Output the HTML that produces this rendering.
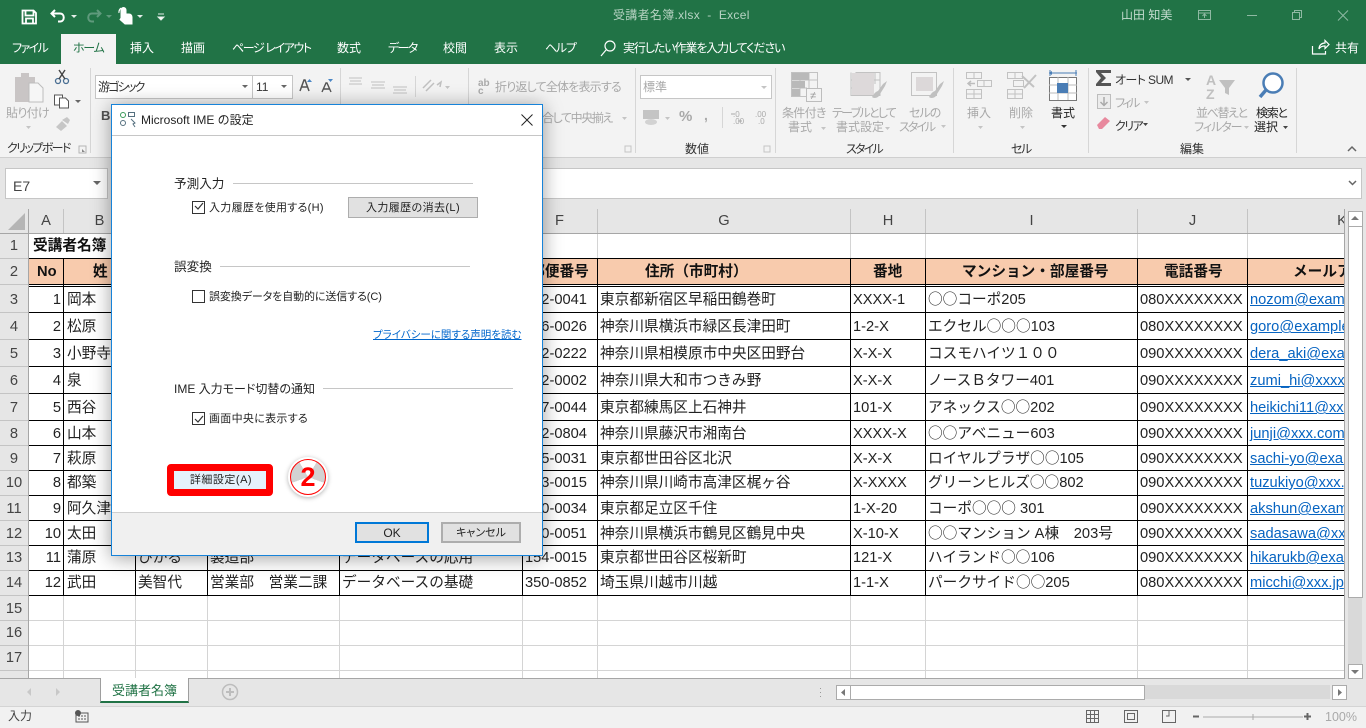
<!DOCTYPE html>
<html lang="ja"><head><meta charset="utf-8"><title>受講者名簿.xlsx - Excel</title>
<style>
html,body{margin:0;padding:0;width:1366px;height:728px;overflow:hidden;background:#e6e6e6}
body{font-family:"Liberation Sans","Noto Sans CJK JP",sans-serif;position:relative;color:#222}
.abs,.t{position:absolute}
.t{white-space:nowrap;font-size:12px;line-height:20px;height:20px;font-feature-settings:"palt";}
.w{color:#fff}.g0{color:#a9a9a9}.d0{color:#333}
svg{position:absolute;left:0;top:0;overflow:visible}
#grid{position:absolute;left:0;top:209px;width:1345px;height:469px;overflow:hidden;background:#fff}
.r{position:absolute;left:0;width:1345px;font-size:14.67px;color:#222;white-space:nowrap}
.r span{position:absolute;top:0}
.o{font-style:normal;font-family:"Noto Sans CJK JP",sans-serif;line-height:0}
.n{left:0;width:28px;text-align:center;color:#444}
.a{left:29px;width:32px;text-align:right}
.b{left:67px}.c{left:138px}.d{left:210px}.e{left:342px}.f{left:525px}.g{left:600px}.h{left:853px}.i{left:928px}.j{left:1140px}
.k{left:1250px;color:#0563c1;text-decoration:underline}
.hd{font-weight:bold;color:#111}
.col{position:absolute;top:0;height:24px;line-height:24px;text-align:center;font-size:14.67px;color:#444}
#dlg{position:absolute;left:111px;top:104px;width:430px;height:450px;background:#fff;border:1px solid #1783d9;box-shadow:0 2px 18px rgba(0,0,0,.38)}
#dlg .t{font-size:11px;color:#222}
.ln{position:absolute;height:1px;background:#c6c6c6}
.cb{position:absolute;left:80px;width:11px;height:11px;border:1px solid #333;background:#fff}
.btn{position:absolute;box-sizing:border-box;background:#e1e1e1;border:1px solid #adadad;text-align:center;font-size:11px;color:#222;font-feature-settings:"palt"}
</style></head><body>

<div class="abs" style="left:0;top:0;width:1366px;height:64px;background:#217346"></div>
<div class="abs" style="left:61px;top:34px;width:55px;height:30px;background:#f3f3f3"></div>
<div class="abs" style="left:0;top:64px;width:1366px;height:93px;background:#f3f3f3;border-bottom:1px solid #cfcfcf"></div>

<!-- titlebar text -->
<div class="t" style="left:613px;top:5px;color:#b7d3c3;letter-spacing:.3px">受講者名簿.xlsx &nbsp;- &nbsp;Excel</div>
<div class="t" style="left:1121px;top:5px;color:#c4dccf">山田 知美</div>
<div class="t w" style="left:12px;top:38px;letter-spacing:-1.6px">ファイル</div>
<div class="t" style="left:73px;top:38px;color:#217346;letter-spacing:-1.3px">ホーム</div>
<div class="t w" style="left:130px;top:38px">挿入</div>
<div class="t w" style="left:181px;top:38px">描画</div>
<div class="t w" style="left:232px;top:38px;letter-spacing:-1.4px">ページ レイアウト</div>
<div class="t w" style="left:337px;top:38px">数式</div>
<div class="t w" style="left:388px;top:38px;letter-spacing:-1.6px">データ</div>
<div class="t w" style="left:443px;top:38px">校閲</div>
<div class="t w" style="left:494px;top:38px">表示</div>
<div class="t w" style="left:545px;top:38px;letter-spacing:-1.3px">ヘルプ</div>
<div class="t w" style="left:623px;top:38px;letter-spacing:-1.1px">実行したい作業を入力してください</div>
<div class="t w" style="left:1335px;top:38px">共有</div>

<!-- ribbon text -->
<div class="t g0" style="left:6px;top:103px;letter-spacing:-.7px">貼り付け</div>
<div class="t d0" style="left:7px;top:138px;letter-spacing:-1.6px">クリップボード</div>
<div class="abs" style="left:95px;top:75px;width:156px;height:22px;background:#fff;border:1px solid #c6c6c6"></div>
<div class="abs" style="left:252px;top:75px;width:39px;height:22px;background:#fff;border:1px solid #c6c6c6"></div>
<div class="t d0" style="left:98px;top:77px;letter-spacing:-1.8px">游ゴシック</div>
<div class="t d0" style="left:256px;top:77px">11</div>
<div class="t" style="left:101px;top:106px;font-weight:bold;color:#555;font-size:13px">B</div>
<div class="t g0" style="left:495px;top:77px;letter-spacing:-.8px">折り返して全体を表示する</div>
<div class="t g0" style="left:542px;top:108px;letter-spacing:-1.4px">合して中央揃え</div>
<div class="abs" style="left:640px;top:75px;width:130px;height:22px;background:#fff;border:1px solid #c6c6c6"></div>
<div class="t g0" style="left:643px;top:77px">標準</div>
<div class="t g0" style="left:679px;top:107px;font-size:15px;font-weight:bold">%</div>
<div class="t d0" style="left:685px;top:139px">数値</div>
<div class="t g0" style="left:782px;top:103px;letter-spacing:-.7px">条件付き</div>
<div class="t g0" style="left:788px;top:117px">書式</div>
<div class="t g0" style="left:832px;top:103px;letter-spacing:-1.7px">テーブルとして</div>
<div class="t g0" style="left:836px;top:117px">書式設定</div>
<div class="t g0" style="left:909px;top:103px;letter-spacing:-1px">セルの</div>
<div class="t g0" style="left:899px;top:117px;letter-spacing:-2px">スタイル</div>
<div class="t d0" style="left:846px;top:139px;letter-spacing:-1.8px">スタイル</div>
<div class="t g0" style="left:967px;top:103px">挿入</div>
<div class="t g0" style="left:1009px;top:103px">削除</div>
<div class="t" style="left:1051px;top:103px;color:#222">書式</div>
<div class="t d0" style="left:1011px;top:139px;letter-spacing:-1.5px">セル</div>
<div class="t d0" style="left:1115px;top:70px;letter-spacing:-.6px">オート SUM</div>
<div class="t g0" style="left:1115px;top:93px;letter-spacing:-2.5px">フィル</div>
<div class="t d0" style="left:1115px;top:116px;letter-spacing:-1.5px">クリア</div>
<div class="t g0" style="left:1196px;top:103px;letter-spacing:-1.4px">並べ替えと</div>
<div class="t g0" style="left:1194px;top:117px;letter-spacing:-1px">フィルター</div>
<div class="t" style="left:1256px;top:103px;color:#222;letter-spacing:-1.3px">検索と</div>
<div class="t" style="left:1254px;top:117px;color:#222">選択</div>
<div class="t d0" style="left:1180px;top:139px">編集</div>

<!-- formula bar -->
<div class="abs" style="left:5px;top:168px;width:101px;height:29px;background:#fff;border:1px solid #c6c6c6"></div>
<div class="t" style="left:13px;top:176px;font-size:14px;color:#444">E7</div>
<div class="abs" style="left:300px;top:168px;width:1060px;height:29px;background:#fff;border:1px solid #c6c6c6"></div>

<!-- grid -->
<div id="grid">
<div class="abs" style="left:0;top:0;width:1345px;height:25px;background:#e6e6e6"></div>
<div class="abs" style="left:0;top:0;width:28px;height:469px;background:#e6e6e6"></div>
<div class="abs" style="left:29px;top:49px;width:1316px;height:27px;background:#f8cbad"></div>
<svg width="1345" height="469" shape-rendering="crispEdges">
<g transform="translate(0,-209)">
<polygon points="25,213 25,230 8,230" fill="#b5b5b5" shape-rendering="auto"/>
<!-- light gridlines -->
<g fill="#d4d4d4">
<rect x="135" y="234" width="1" height="24"/><rect x="207" y="234" width="1" height="24"/><rect x="339" y="234" width="1" height="24"/><rect x="522" y="234" width="1" height="24"/><rect x="597" y="234" width="1" height="24"/><rect x="850" y="234" width="1" height="24"/><rect x="925" y="234" width="1" height="24"/><rect x="1137" y="234" width="1" height="24"/><rect x="1247" y="234" width="1" height="24"/>
<rect x="63" y="596" width="1" height="82"/><rect x="135" y="596" width="1" height="82"/><rect x="207" y="596" width="1" height="82"/><rect x="339" y="596" width="1" height="82"/><rect x="522" y="596" width="1" height="82"/><rect x="597" y="596" width="1" height="82"/><rect x="850" y="596" width="1" height="82"/><rect x="925" y="596" width="1" height="82"/><rect x="1137" y="596" width="1" height="82"/><rect x="1247" y="596" width="1" height="82"/>
<rect x="29" y="620" width="1316" height="1"/><rect x="29" y="645" width="1316" height="1"/><rect x="29" y="670" width="1316" height="1"/>
</g>
<!-- header separators -->
<g fill="#c4c4c4">
<rect x="63" y="209" width="1" height="24"/><rect x="135" y="209" width="1" height="24"/><rect x="207" y="209" width="1" height="24"/><rect x="339" y="209" width="1" height="24"/><rect x="522" y="209" width="1" height="24"/><rect x="597" y="209" width="1" height="24"/><rect x="850" y="209" width="1" height="24"/><rect x="925" y="209" width="1" height="24"/><rect x="1137" y="209" width="1" height="24"/><rect x="1247" y="209" width="1" height="24"/>
<rect x="0" y="258" width="28" height="1"/><rect x="0" y="284" width="28" height="1"/><rect x="0" y="312" width="28" height="1"/><rect x="0" y="339" width="28" height="1"/><rect x="0" y="366" width="28" height="1"/><rect x="0" y="393" width="28" height="1"/><rect x="0" y="420" width="28" height="1"/><rect x="0" y="445" width="28" height="1"/><rect x="0" y="470" width="28" height="1"/><rect x="0" y="495" width="28" height="1"/><rect x="0" y="520" width="28" height="1"/><rect x="0" y="545" width="28" height="1"/><rect x="0" y="570" width="28" height="1"/><rect x="0" y="595" width="28" height="1"/><rect x="0" y="620" width="28" height="1"/><rect x="0" y="645" width="28" height="1"/><rect x="0" y="670" width="28" height="1"/>
</g>
<rect x="28" y="209" width="1" height="469" fill="#a6a6a6"/>
<rect x="0" y="233" width="1345" height="1" fill="#a6a6a6"/>
<!-- table borders -->
<g fill="#000">
<rect x="29" y="258" width="1316" height="1"/><rect x="29" y="284" width="1316" height="1"/><rect x="29" y="286" width="1316" height="1"/>
<rect x="29" y="312" width="1316" height="1"/><rect x="29" y="339" width="1316" height="1"/><rect x="29" y="366" width="1316" height="1"/><rect x="29" y="393" width="1316" height="1"/><rect x="29" y="420" width="1316" height="1"/><rect x="29" y="445" width="1316" height="1"/><rect x="29" y="470" width="1316" height="1"/><rect x="29" y="495" width="1316" height="1"/><rect x="29" y="520" width="1316" height="1"/><rect x="29" y="545" width="1316" height="1"/><rect x="29" y="570" width="1316" height="1"/><rect x="29" y="595" width="1316" height="1"/>
<rect x="63" y="258" width="1" height="338"/><rect x="135" y="258" width="1" height="338"/><rect x="207" y="258" width="1" height="338"/><rect x="339" y="258" width="1" height="338"/><rect x="522" y="258" width="1" height="338"/><rect x="597" y="258" width="1" height="338"/><rect x="850" y="258" width="1" height="338"/><rect x="925" y="258" width="1" height="338"/><rect x="1137" y="258" width="1" height="338"/><rect x="1247" y="258" width="1" height="338"/>
</g>
</g></svg>

<div class="col" style="left:29px;width:34px">A</div><div class="col" style="left:64px;width:71px">B</div><div class="col" style="left:522px;width:75px">F</div><div class="col" style="left:598px;width:252px">G</div><div class="col" style="left:851px;width:74px">H</div><div class="col" style="left:926px;width:211px">I</div><div class="col" style="left:1138px;width:109px">J</div><div class="col" style="left:1336px;width:12px">K</div>

<div class="r" style="top:25px;height:24px;line-height:24px"><span class="n">1</span><span class="hd" style="left:33px">受講者名簿</span></div>
<div class="r" style="top:50px;height:26px;line-height:26px"><span class="n">2</span><span class="hd" style="left:37px">No</span><span class="hd" style="left:93px">姓</span><span class="hd" style="left:522px;width:75px;text-align:center">郵便番号</span><span class="hd" style="left:645px">住所（市町村）</span><span class="hd" style="left:873px">番地</span><span class="hd" style="left:962px">マンション・部屋番号</span><span class="hd" style="left:1164px">電話番号</span><span class="hd" style="left:1293px">メールアドレス</span></div>
<div class="r" style="top:78px;height:27px;line-height:27px"><span class="n">3</span><span class="a">1</span><span class="b">岡本</span><span class="f">162-0041</span><span class="g">東京都新宿区早稲田鶴巻町</span><span class="h">XXXX-1</span><span class="i"><em class="o">○○</em>コーポ205</span><span class="j">080XXXXXXXX</span><span class="k">nozom@example.jp</span></div>
<div class="r" style="top:105px;height:27px;line-height:27px"><span class="n">4</span><span class="a">2</span><span class="b">松原</span><span class="f">226-0026</span><span class="g">神奈川県横浜市緑区長津田町</span><span class="h">1-2-X</span><span class="i">エクセル<em class="o">○○○</em>103</span><span class="j">080XXXXXXXX</span><span class="k">goro@example.jp</span></div>
<div class="r" style="top:132px;height:27px;line-height:27px"><span class="n">5</span><span class="a">3</span><span class="b">小野寺</span><span class="f">252-0222</span><span class="g">神奈川県相模原市中央区田野台</span><span class="h">X-X-X</span><span class="i">コスモハイツ１００</span><span class="j">090XXXXXXXX</span><span class="k">dera_aki@example.jp</span></div>
<div class="r" style="top:159px;height:27px;line-height:27px"><span class="n">6</span><span class="a">4</span><span class="b">泉</span><span class="f">242-0002</span><span class="g">神奈川県大和市つきみ野</span><span class="h">X-X-X</span><span class="i">ノースＢタワー401</span><span class="j">090XXXXXXXX</span><span class="k">zumi_hi@xxxx.jp</span></div>
<div class="r" style="top:186px;height:27px;line-height:27px"><span class="n">7</span><span class="a">5</span><span class="b">西谷</span><span class="f">177-0044</span><span class="g">東京都練馬区上石神井</span><span class="h">101-X</span><span class="i">アネックス<em class="o">○○</em>202</span><span class="j">090XXXXXXXX</span><span class="k">heikichi11@xxx.jp</span></div>
<div class="r" style="top:213px;height:25px;line-height:25px"><span class="n">8</span><span class="a">6</span><span class="b">山本</span><span class="f">252-0804</span><span class="g">神奈川県藤沢市湘南台</span><span class="h">XXXX-X</span><span class="i"><em class="o">○○</em>アベニュー603</span><span class="j">090XXXXXXXX</span><span class="k">junji@xxx.com</span></div>
<div class="r" style="top:238px;height:25px;line-height:25px"><span class="n">9</span><span class="a">7</span><span class="b">萩原</span><span class="f">155-0031</span><span class="g">東京都世田谷区北沢</span><span class="h">X-X-X</span><span class="i">ロイヤルプラザ<em class="o">○○</em>105</span><span class="j">090XXXXXXXX</span><span class="k">sachi-yo@example.jp</span></div>
<div class="r" style="top:262px;height:25px;line-height:25px"><span class="n">10</span><span class="a">8</span><span class="b">都築</span><span class="f">213-0015</span><span class="g">神奈川県川崎市高津区梶ヶ谷</span><span class="h">X-XXXX</span><span class="i">グリーンヒルズ<em class="o">○○</em>802</span><span class="j">090XXXXXXXX</span><span class="k">tuzukiyo@xxx.jp</span></div>
<div class="r" style="top:288px;height:25px;line-height:25px"><span class="n">11</span><span class="a">9</span><span class="b">阿久津</span><span class="f">120-0034</span><span class="g">東京都足立区千住</span><span class="h">1-X-20</span><span class="i">コーポ<em class="o">○○○</em> 301</span><span class="j">090XXXXXXXX</span><span class="k">akshun@example.jp</span></div>
<div class="r" style="top:313px;height:25px;line-height:25px"><span class="n">12</span><span class="a">10</span><span class="b">太田</span><span class="f">230-0051</span><span class="g">神奈川県横浜市鶴見区鶴見中央</span><span class="h">X-10-X</span><span class="i"><em class="o">○○</em>マンション A棟　203号</span><span class="j">090XXXXXXXX</span><span class="k">sadasawa@xxx.jp</span></div>
<div class="r" style="top:337px;height:25px;line-height:25px"><span class="n">13</span><span class="a">11</span><span class="b">蒲原</span><span class="c">ひかる</span><span class="d">製造部</span><span class="e">データベースの応用</span><span class="f">154-0015</span><span class="g">東京都世田谷区桜新町</span><span class="h">121-X</span><span class="i">ハイランド<em class="o">○○</em>106</span><span class="j">090XXXXXXXX</span><span class="k">hikarukb@example.jp</span></div>
<div class="r" style="top:362px;height:25px;line-height:25px"><span class="n">14</span><span class="a">12</span><span class="b">武田</span><span class="c">美智代</span><span class="d">営業部　営業二課</span><span class="e">データベースの基礎</span><span class="f">350-0852</span><span class="g">埼玉県川越市川越</span><span class="h">1-1-X</span><span class="i">パークサイド<em class="o">○○</em>205</span><span class="j">080XXXXXXXX</span><span class="k">micchi@xxx.jp</span></div>
<div class="r" style="top:388px;height:25px;line-height:25px"><span class="n">15</span></div>
<div class="r" style="top:412px;height:25px;line-height:25px"><span class="n">16</span></div>
<div class="r" style="top:437px;height:25px;line-height:25px"><span class="n">17</span></div>
</div>

<!-- bottom chrome -->
<div class="abs" style="left:1344px;top:209px;width:1px;height:470px;background:#a6a6a6"></div>
<div class="abs" style="left:0;top:678px;width:1345px;height:1px;background:#a6a6a6"></div>
<div class="abs" style="left:1348px;top:211px;width:14px;height:467px;background:#d9d9d9"></div>
<div class="abs" style="left:1348px;top:211px;width:13px;height:14px;background:#fff;border:1px solid #ababab"></div>
<div class="abs" style="left:1348px;top:226px;width:13px;height:370px;background:#fff;border:1px solid #ababab"></div>
<div class="abs" style="left:1348px;top:664px;width:13px;height:13px;background:#fff;border:1px solid #ababab"></div>
<div class="abs" style="left:100px;top:678px;width:87px;height:23px;background:#fff;border-left:1px solid #9e9e9e;border-right:1px solid #9e9e9e;border-bottom:2px solid #217346"></div>
<div class="t" style="left:112px;top:681px;font-size:13px;color:#217346;font-feature-settings:normal">受講者名簿</div>
<div class="abs" style="left:0;top:706px;width:1366px;height:22px;background:#f1f1f1;border-top:1px solid #d4d4d4;box-sizing:border-box"></div>
<div class="t" style="left:8px;top:706px;color:#444">入力</div>
<div class="abs" style="left:836px;top:685px;width:494px;height:14px;background:#d9d9d9"></div>
<div class="abs" style="left:836px;top:685px;width:13px;height:13px;background:#fff;border:1px solid #ababab"></div>
<div class="abs" style="left:850px;top:685px;width:293px;height:13px;background:#fff;border:1px solid #ababab"></div>
<div class="abs" style="left:1332px;top:685px;width:13px;height:13px;background:#fff;border:1px solid #ababab"></div>
<div class="t" style="left:1325px;top:707px;color:#a9a9a9;font-size:12.5px">100%</div>

<!-- icons -->
<svg width="1366" height="728" style="pointer-events:none">
<!-- QAT -->
<path d="M22.5 10.5h11l2.5 2.5v10.5h-13.500zM25.500 10.500v5h8v-5M26 23.500v-5h7v5" fill="none" stroke="#fff" stroke-width="1.800"/>
<path d="M55 10l-3.500 3.500 3.500 3.500M52 13.500h8c5 0 5 8 0 8h-2" fill="none" stroke="#fff" stroke-width="2"/>
<path d="M71 15h6l-3 3z" fill="#e4eee9"/>
<path d="M97 10l3.500 3.500-3.500 3.500M100 13.500h-8c-5 0-5 8 0 8h2" fill="none" stroke="#5f9a7c" stroke-width="2"/>
<path d="M106 15h6l-3 3z" fill="#5f9a7c"/>
<path d="M121 18v-8a2.500 2.500 0 0 1 5 0v4h3c2 0 3 1.500 3 3v7h-7l-5-4.500z M119 13a5 5 0 0 1 2-5" fill="#fff" stroke="#fff"/>
<path d="M137 15h6l-3 3z" fill="#e4eee9"/>
<path d="M158 14h6M158 17h6l-3 3z" fill="#fff" stroke="#e4eee9"/>
<!-- window -->
<g fill="none" stroke="#8fb9a3">
<rect x="1198.500" y="10.500" width="12" height="9"/><path d="M1198.500 13h12M1204.500 18v-4M1202.500 16l2-2 2 2"/>
<path d="M1247 15.500h10"/>
<rect x="1292.500" y="12.500" width="7" height="7"/><path d="M1294.500 12.500v-2h7v7h-2"/>
<path d="M1338 10.500l10 10M1348 10.500l-10 10"/>
</g>
<!-- search / share -->
<g fill="none" stroke="#fff" stroke-width="1.200">
<circle cx="610" cy="46" r="5"/><path d="M606 50l-5 6"/>
<path d="M1312.500 46v8h13v-3M1319 49c0-4 3-6 6-6v-2.500l4 4-4 4v-2.500c-3 0-5 1-6 3"/>
</g>
<!-- separators -->
<g fill="#d6d6d6"><rect x="90" y="68" width="1" height="85"/><rect x="340" y="68" width="1" height="85"/><rect x="468" y="68" width="1" height="85"/><rect x="635" y="68" width="1" height="85"/><rect x="775" y="68" width="1" height="85"/><rect x="953" y="68" width="1" height="85"/><rect x="1088" y="68" width="1" height="85"/><rect x="1296" y="68" width="1" height="85"/><rect x="415" y="76" width="1" height="21"/><rect x="722" y="107" width="1" height="21"/></g>
<!-- clipboard group -->
<path d="M15 77h6v-4h8v4h6v25h-20z" fill="#c9c5c5"/>
<path d="M29 83h9l5 5v14h-14z" fill="#f6f6f6" stroke="#bdbdbd"/>
<path d="M26 126h5l-2.500 3z" fill="#c4c4c4"/>
<g fill="none" stroke="#4a6f93" stroke-width="1.300"><circle cx="58" cy="81" r="2.500"/><circle cx="66" cy="81" r="2.500"/></g>
<path d="M59 79l6-9M65 79l-6-9" stroke="#444" stroke-width="1.400"/>
<g fill="#fff" stroke="#555"><path d="M54.500 95h8v10h-8z"/><path d="M59.500 98h6l3 3v7h-9z"/></g>
<path d="M75 100h6l-3 3z" fill="#666"/>
<path d="M56 127l6-6 5 5-6 5zM62 120l5-3 3 3-2 4z" fill="#c6c6c6"/>
<rect x="79" y="146" width="7" height="7" fill="none" stroke="#b5b5b5"/><path d="M82 149l3 3h-3z" fill="#888"/>
<rect x="625" y="146" width="6" height="6" fill="none" stroke="#c4c4c4"/>
<rect x="764" y="146" width="6" height="6" fill="none" stroke="#c4c4c4"/>
<!-- font arrows -->
<path d="M242 85h6l-3 3zM281 85h6l-3 3zM93 181h8l-4 4z" fill="#666"/>
<path d="M300 91l4-11h1l4 11M301.500 87h6" fill="none" stroke="#555" stroke-width="1.500"/><path d="M307 82l2.500-3 2.500 3z" fill="#4a86c5"/>
<path d="M322 92l4-9h1l4 9M323.500 89h6" fill="none" stroke="#555" stroke-width="1.400"/><path d="M328 79h5l-2.500 3z" fill="#4a86c5"/>
<!-- align -->
<g stroke="#c0c0c0" fill="none"><path d="M349 78h13M350 81h11M349 84h13M371 82h14M372 85h12M371 88h14M393 87h14M394 90h12M393 93h14"/>
<path d="M423 88l8-8M426 91l8-8M437 85l4-3-1 5" stroke-width="1.500"/></g>
<path d="M445 86h5l-2.500 3zM761 86h6l-3 3zM665 117h5l-2.500 3zM622 117h5l-2.500 3z" fill="#c4c4c4"/>
<text x="478" y="86" font-size="10" fill="#aaa" font-weight="bold" font-family="Liberation Sans">ab</text>
<text x="478" y="94" font-size="10" fill="#aaa" font-weight="bold" font-family="Liberation Sans">c</text>
<!-- number icons -->
<rect x="643" y="110" width="16" height="9" fill="#c4c4c4"/><ellipse cx="651" cy="122" rx="6" ry="3" fill="#d2d2d2"/>
<text x="704" y="120" font-size="14" font-weight="bold" fill="#aaa" font-family="Liberation Sans">,</text>
<text x="733" y="117" font-size="8" fill="#aaa" font-family="Liberation Sans">.0</text><text x="733" y="124" font-size="8" fill="#aaa" font-family="Liberation Sans">.00</text>
<text x="755" y="117" font-size="8" fill="#aaa" font-family="Liberation Sans">.00</text><text x="758" y="124" font-size="8" fill="#aaa" font-family="Liberation Sans">.0</text>
<path d="M735 114h-4M738 121h4" stroke="#aaa"/>
<!-- styles -->
<g fill="none" stroke="#c2c2c2"><rect x="791.500" y="72.500" width="26" height="24"/><path d="M800 72v24M809 72v16M791 80h26M791 88h16"/>
<rect x="856" y="72.500" width="24" height="23"/><path d="M851 80h29M851 88h22M859 72v24M867 72v24M875 72v12M851 72.500v23h22"/>
<rect x="911.500" y="72.500" width="25" height="23"/></g>
<path d="M792 73h17v7h-17zM792 81h13v7h-13zM792 89h8v7h-8z" fill="#b9b9b9"/>
<rect x="806.500" y="88.500" width="15" height="13" fill="#f3f3f3" stroke="#bdbdbd"/><text x="810" y="99" font-size="11" fill="#999" font-family="Liberation Sans">≠</text>
<rect x="852" y="73" width="22" height="22" fill="#ddd9da"/>
<rect x="916" y="77" width="17" height="14" fill="#dcd8d9"/>
<path d="M872 97c2-3 3-5 6-6l5-7 4-3-2 5-5 8c-1 4-6 5-8 3z" fill="#c0c0c0"/>
<path d="M929 97c2-3 3-5 6-6l5-7 4-3-2 5-5 8c-1 4-6 5-8 3z" fill="#c0c0c0"/>
<path d="M821 127h5l-2.500 3zM885 127h5l-2.500 3zM941 125h5l-2.500 3z" fill="#c4c4c4"/>
<!-- cells -->
<g fill="none" stroke="#c2c2c2"><rect x="966.500" y="72.500" width="15" height="6"/><path d="M974 72v6"/><rect x="966.500" y="89.500" width="15" height="9"/><path d="M974 89v9M966 94h15"/>
<rect x="977.500" y="80.500" width="14" height="6"/><path d="M984 80v6"/>
<rect x="1007.500" y="72.500" width="15" height="6"/><path d="M1015 72v6"/><rect x="1007.500" y="89.500" width="15" height="9"/><path d="M1015 89v9M1007 94h15"/><rect x="1013.500" y="80.500" width="10" height="6"/></g>
<path d="M975 83.500h-7M971 81l-3 2.500 3 2.500" fill="none" stroke="#bdbdbd" stroke-width="1.500"/>
<path d="M1022 76l12 11M1036 75l-12 13" stroke="#c2c2c2" stroke-width="2"/>
<path d="M978 126h5l-2.500 3zM1020 126h5l-2.500 3z" fill="#c4c4c4"/><path d="M1061 125h6l-3 3z" fill="#333"/>
<path d="M1049 73h28M1050 70v6M1076 70v6" stroke="#4a7db5" fill="none"/>
<path d="M1049 73l3-2v4z" fill="#4a7db5"/>
<rect x="1049.500" y="77.500" width="27" height="23" fill="#fff" stroke="#777"/><path d="M1058 77v23M1068 77v23M1049 85h28M1049 93h28" stroke="#bbb"/>
<rect x="1057" y="83" width="11" height="10" fill="#4a7db5"/>
<!-- editing -->
<path d="M1096 70h15v3h-10l5 5-5 5h10v3h-15v-2l5-6-5-6z" fill="#555"/>
<path d="M1185 78h6l-3 3z" fill="#555"/>
<rect x="1097.500" y="94.500" width="13" height="14" fill="#ececec" stroke="#bdbdbd"/><path d="M1104 97v8M1100.500 102l3.500 3.500 3.500-3.500" fill="none" stroke="#aaa" stroke-width="1.500"/>
<path d="M1144 101h5l-2.500 3z" fill="#c4c4c4"/>
<path d="M1097 125l8-8 5 4-8 8h-3z" fill="#e8899e"/>
<path d="M1143 123h5l-2.500 3zM1283 126h5l-2.500 3z" fill="#444"/><path d="M1244 126h5l-2.500 3z" fill="#c4c4c4"/>
<text x="1206" y="85" font-size="14" font-weight="bold" fill="#c0c0c0" font-family="Liberation Sans">A</text>
<text x="1206" y="99" font-size="14" font-weight="bold" fill="#c0c0c0" font-family="Liberation Sans">Z</text>
<path d="M1219 80h16l-6 8v7l-4-2v-5z" fill="#c0c0c0"/>
<circle cx="1273" cy="83" r="9.500" fill="#fff" stroke="#4a7db5" stroke-width="2.500"/>
<path d="M1266 90l-6 7" stroke="#4a7db5" stroke-width="3.500"/>
<path d="M1348 151l4-4 4 4" fill="none" stroke="#666" stroke-width="1.500"/>
<path d="M1349 181l3.500 3.500 3.500-3.500" fill="none" stroke="#666" stroke-width="1.500"/>
<!-- scrollbars -->
<path d="M1351 220l4-4 4 4zM1351 670l4 4 4-4z" fill="#777"/>
<path d="M1338 689v7l4-3.500zM845 689v7l-4-3.500z" fill="#777"/>
<path d="M31 688v8l-4-4zM56 688v8l4-4z" fill="#c8c8c8"/>
<circle cx="230" cy="692" r="7.500" fill="none" stroke="#bdbdbd" stroke-width="1.500"/><path d="M226 692h8M230 688v8" stroke="#bdbdbd" stroke-width="2"/>
<path d="M820.500 688v1M820.500 692v1M820.500 696v1" stroke="#999"/>
<!-- status -->
<circle cx="78" cy="713" r="3" fill="#555"/><path d="M76 713h12v9h-12z" fill="none" stroke="#555"/><path d="M78 716h8M78 719h8" stroke="#555" stroke-dasharray="2 1"/>
<g fill="none" stroke="#666"><rect x="1086.500" y="710.500" width="12" height="12"/><path d="M1090.500 710v12M1094.500 710v12M1086 714.500h12M1086 718.500h12"/>
<rect x="1124.500" y="710.500" width="13" height="12"/><rect x="1127.500" y="713.500" width="7" height="6"/>
<rect x="1162.500" y="710.500" width="13" height="12"/><path d="M1169 710v6h-3"/></g>
<path d="M1193 716.500h6" stroke="#666" stroke-width="2"/><path d="M1304 716.500h7M1307.500 713v7" stroke="#666" stroke-width="2"/>
<path d="M1203 717h100M1253 714v6" stroke="#aaa"/>
</svg>

<!-- dialog -->
<div id="dlg">
<div class="t" style="left:29px;top:5px;font-size:12px;font-feature-settings:normal">Microsoft IME の設定</div>
<svg width="430" height="450">
<g fill="none" stroke="#55707f"><circle cx="11" cy="10" r="2.500" stroke="#3a9a5a"/><circle cx="11" cy="18" r="2.500"/><rect x="16.500" y="7.500" width="6" height="4"/><path d="M19 14l4 4-2 1 2 3"/></g>
<path d="M409.500 9.500l11 11M420.500 9.500l-11 11" stroke="#222" fill="none"/>
<path d="M83 101l3 3 5-6M83 314l3 3 5-6" fill="none" stroke="#333" stroke-width="1.200"/>
</svg>
<div class="ln" style="left:0;top:30px;width:430px"></div>

<div class="t" style="left:62px;top:69px;font-size:12.6px;font-feature-settings:normal">予測入力</div>
<div class="ln" style="left:121px;top:78px;width:240px"></div>
<div class="cb" style="top:96px;background:none"></div>
<div class="t" style="left:97px;top:93px;letter-spacing:.3px">入力履歴を使用する(H)</div>
<div class="btn" style="left:236px;top:92px;width:130px;height:21px;line-height:20px;letter-spacing:.4px">入力履歴の消去(L)</div>

<div class="t" style="left:62px;top:152px;font-size:12.6px;font-feature-settings:normal">誤変換</div>
<div class="ln" style="left:108px;top:161px;width:250px"></div>
<div class="cb" style="top:185px"></div>
<div class="t" style="left:97px;top:182px;letter-spacing:-.1px">誤変換データを自動的に送信する(C)</div>
<div class="t" style="left:261px;top:220px;color:#0066cc;text-decoration:underline;font-size:10.500px">プライバシーに関する声明を読む</div>

<div class="t" style="left:62px;top:274px;font-size:12px">IME 入力モード切替の通知</div>
<div class="ln" style="left:211px;top:283px;width:190px"></div>
<div class="cb" style="top:307px;background:none"></div>
<div class="t" style="left:97px;top:304px;letter-spacing:.3px">画面中央に表示する</div>

<div class="abs" style="left:55px;top:359px;width:106px;height:32px;box-sizing:border-box;border:7px solid #f00;border-radius:4px;background:#e5f1fb;text-align:center;line-height:19px;font-size:11px;color:#222;font-feature-settings:normal;letter-spacing:.5px;padding-left:2px">詳細設定(A)</div>
<div class="abs" style="left:176px;top:352px;width:40px;height:40px;border-radius:50%;background:#fff;box-shadow:0 1px 5px rgba(0,0,0,.3)"></div>
<div class="abs" style="left:178px;top:354px;width:34px;height:34px;border-radius:50%;border:1.500px solid #f00;background:conic-gradient(#fff 0 30deg,#d2d2d2 30deg 110deg,#fff 110deg 250deg,#d2d2d2 250deg 330deg,#fff 330deg);box-sizing:content-box;text-align:center;line-height:35px;font-size:27px;font-weight:bold;color:#f00;font-family:'Liberation Sans',sans-serif">2</div>

<div class="abs" style="left:0;top:407px;width:430px;height:43px;background:#f0f0f0;border-top:1px solid #cfcfcf;box-sizing:border-box"></div>
<div class="btn" style="left:243px;top:417px;width:74px;height:21px;line-height:19px;border:2px solid #0078d7;font-family:'Liberation Sans',sans-serif;font-size:12px">OK</div>
<div class="btn" style="left:329px;top:417px;width:80px;height:21px;line-height:19px;border:2px solid #adadad">キャンセル</div>
</div>
</body></html>
